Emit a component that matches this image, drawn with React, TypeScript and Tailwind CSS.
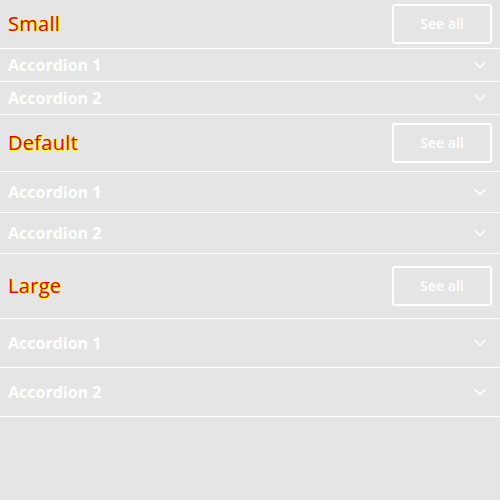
import React from 'react';

interface SectionProps {
    title: string;
    headerClass: string;
    rowClass: string;
}

function Chevron() {
    return (
        <svg width="12" height="8" viewBox="0 0 12 8" fill="none" className="mr-[14px]">
            <polyline points="1,1.5 6,6.5 11,1.5" stroke="white" strokeWidth="1.6" strokeLinecap="round" strokeLinejoin="round"/>
        </svg>
    );
}

function Section(props: SectionProps) {
    const {title, headerClass, rowClass} = props;
    return (
        <div className="flex flex-col">
            <div className={`flex flex-row items-center justify-between border-b border-white pl-2 pr-2 ${headerClass}`}>
                <p className="text-[20px] tracking-[0.3px] text-red-600 [text-shadow:1px_0_0_#ffff00,0_1px_0_#ffff00,1px_1px_0_#ffff00]">{title}</p>
                <button className="w-[100px] h-[40px] rounded-[3px] border-2 border-white pb-[1px] text-[14px] leading-none font-semibold text-white">
                    See all
                </button>
            </div>
            {['Accordion 1', 'Accordion 2'].map((label) => {
                return (
                    <div key={label} className={`flex flex-row items-center justify-between border-b border-white pl-2 ${rowClass}`}>
                        <span className="text-[16px] font-bold text-white">{label}</span>
                        <Chevron/>
                    </div>
                );
            })}
        </div>
    );
}

export default function App() {
    return (
        <div className="w-[500px] h-[500px] bg-[#e5e5e5] font-['Open_Sans',sans-serif]">
            <Section title="Small" headerClass="h-[49px]" rowClass="h-[33px]"/>
            <Section title="Default" headerClass="h-[57px]" rowClass="h-[41px]"/>
            <Section title="Large" headerClass="h-[65px]" rowClass="h-[49px]"/>
        </div>
    );
}
